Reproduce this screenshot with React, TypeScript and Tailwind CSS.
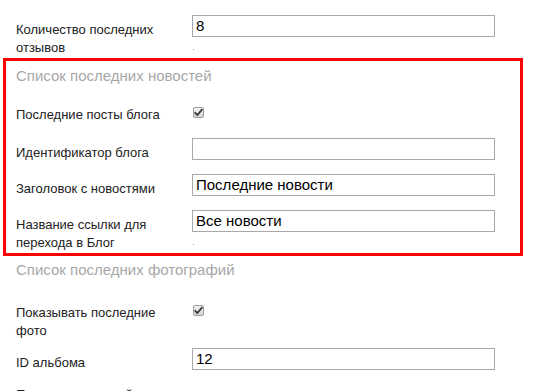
import React from "react";

type RowProps = {
  label: string;
  value?: string;
  checked?: boolean;
  dot?: boolean;
  bare?: boolean;
  className?: string;
};

// Small gray checked checkbox, like the old Windows Chrome one
function Check() {
  return (
    <span className="flex h-[11px] w-[11px] items-center justify-center rounded-[2px] border border-[#9c9c9c] bg-gradient-to-b from-[#f2f2f2] to-[#d6d6d6]">
      <svg width="9" height="9" viewBox="0 0 9 9">
        <path
          d="M1.2 4.8 L3.4 7 L7.9 1.6"
          fill="none"
          stroke="#3a3a3a"
          strokeWidth="1.8"
          strokeLinecap="round"
          strokeLinejoin="round"
        />
      </svg>
    </span>
  );
}

function Row({ label, value, checked, dot, bare, className }: RowProps) {
  let control: React.ReactNode = null;
  if (checked) {
    control = (
      <div className="pt-[7px] pl-[1px]">
        <Check />
      </div>
    );
  } else if (!bare) {
    control = (
      <div>
        <div className="h-[22px] w-[303px] border border-[#a9a9a9] bg-white px-[3px] text-[15px] leading-[20px] text-black">
          {value}
        </div>
        {dot && <div className="ml-[1px] mt-[12px] h-px w-px bg-[#9a9a9a]" />}
      </div>
    );
  }
  return (
    <div className={"grid grid-cols-[176px_303px] " + (className ?? "")}>
      <div className="pt-[6px] pr-[20px] text-[13px] leading-[18px] text-[#222]">
        {label}
      </div>
      {control}
    </div>
  );
}

export default function App() {
  return (
    <div className="h-[391px] w-[534px] overflow-hidden bg-white font-['Liberation_Sans',Arial,sans-serif]">
      <div className="pt-[15px]">
        <div className="pl-[16px]">
          <Row label="Количество последних отзывов" value="8" dot />
        </div>

        <section className="ml-[3px] mt-[1px] w-[520px] border-[3px] border-[#ff0000] pb-[1px] pl-[10px] pt-[5px]">
          <h3 className="text-[15px] leading-[20px] text-[#a8a8a8]">
            Список последних новостей
          </h3>
          <Row className="mt-[14px]" label="Последние посты блога" checked />
          <Row className="mt-[14px]" label="Идентификатор блога" value="" />
          <Row className="mt-[12px]" label="Заголовок с новостями" value="Последние новости" />
          <Row
            className="mt-[12px]"
            label="Название ссылки для перехода в Блог"
            value="Все новости"
            dot
          />
        </section>

        <div className="pl-[16px]">
          <h3 className="mt-[4px] text-[15px] leading-[20px] text-[#a8a8a8]">
            Список последних фотографий
          </h3>
          <Row className="mt-[18px]" label="Показывать последние фото" checked />
          <Row className="mt-[8px]" label="ID альбома" value="12" />
          <Row className="mt-[8px]" label="Показывать случайные" bare />
        </div>
      </div>
    </div>
  );
}
